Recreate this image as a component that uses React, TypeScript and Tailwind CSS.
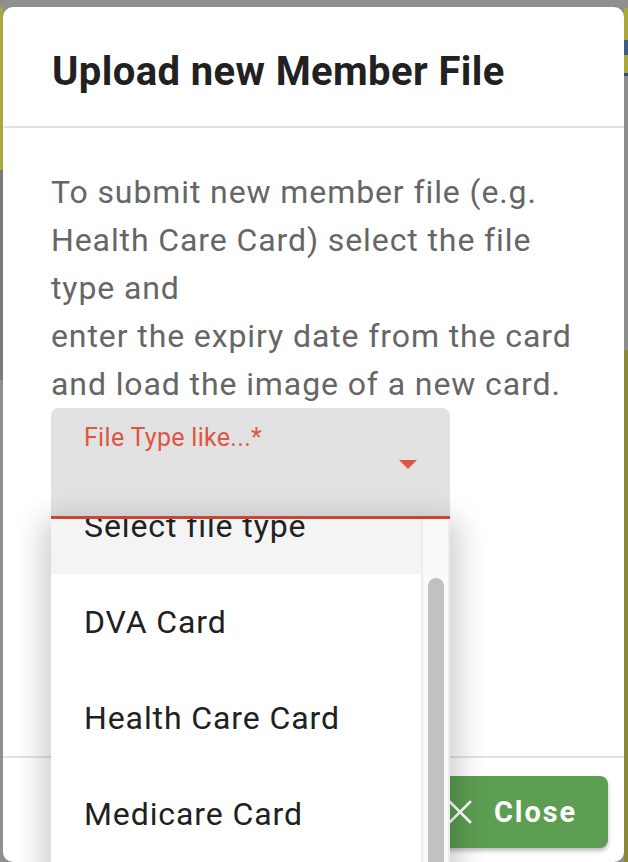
import React from "react";

export default function App() {
  const items = ["Select file type", "DVA Card", "Health Care Card", "Medicare Card"];
  return (
    <div className="w-[628px] h-[862px] overflow-hidden bg-[#8f8f8f] flex font-['Roboto',_'Liberation_Sans',_sans-serif]">
      {/* left strip of page behind overlay */}
      <div className="w-[3px] flex flex-col shrink-0">
        <div className="h-[7px] bg-[#8f8f8f]" />
        <div className="h-[163px] bg-[#a9a93b]" />
        <div className="h-[210px] bg-[#7b7b7b]" />
        <div className="flex-1 bg-[#8f8f8f]" />
      </div>

      {/* dialog column */}
      <div className="flex-1 pt-[7px] flex flex-col">
        <div className="relative flex-1 bg-white rounded-[10px] flex flex-col">
          <div className="px-[49px] pt-[41px] pb-[30px]">
            <h2 className="text-[40px] leading-[48px] font-bold text-[#212121] tracking-[0.4px] whitespace-nowrap">
              Upload new Member File
            </h2>
          </div>
          <div className="h-[2px] bg-[#e2e2e2]" />
          <div className="px-[48px] pt-[40px]">
            <p className="text-[32px] leading-[48px] text-[#666666] tracking-[0.9px] whitespace-nowrap">
              To submit new member file (e.g.
              <br />
              Health Care Card) select the file
              <br />
              type and
              <br />
              enter the expiry date from the card
              <br />
              and load the image of a new card.
            </p>
            <div className="relative w-[399px] h-[111px] bg-[#e2e2e2] rounded-t-[8px]">
              <div className="pl-[33px] pt-[16px] text-[25px] leading-[28px] text-[#df5543] tracking-[0.3px]">
                File Type like...*
              </div>
              <div className="absolute right-[33px] top-[52px] w-0 h-0 border-l-[9px] border-r-[9px] border-t-[9px] border-l-transparent border-r-transparent border-t-[#df5543]" />
              <div className="absolute left-0 right-0 bottom-0 h-[3px] bg-[#dc4c3a]" />
            </div>
          </div>
          <div className="flex-1" />
          <div className="h-[2px] bg-[#e2e2e2]" />
          <div className="flex justify-end pr-[16px] pt-[18px] pb-[14px]">
            <button className="w-[170px] h-[72px] bg-[#5c9e52] rounded-[8px] shadow-[0_3px_4px_rgba(0,0,0,0.25)] flex items-center pl-[10px] gap-[22px] text-white">
              <svg width="24" height="24" viewBox="0 0 24 24" fill="none" stroke="white" strokeWidth="2.6" strokeLinecap="square">
                <path d="M2 2 L22 22 M22 2 L2 22" />
              </svg>
              <span className="text-[29px] font-bold tracking-[1.9px] leading-none">Close</span>
            </button>
          </div>

          {/* dropdown menu overlay */}
          <div className="absolute left-[48px] top-[512px] w-[399px] h-[400px] bg-white shadow-[0_8px_28px_8px_rgba(0,0,0,0.2)] flex overflow-hidden">
            <div className="flex-1 overflow-hidden">
              <div className="-mt-[41px]">
                {items.map((it, i) => (
                  <div
                    key={it}
                    className={
                      "h-[96px] flex items-center pl-[33px] text-[32px] text-[#212121] tracking-[0.9px] " +
                      (i === 0 ? "bg-[#f4f4f4]" : "bg-white")
                    }
                  >
                    {it}
                  </div>
                ))}
              </div>
            </div>
            <div className="w-[29px] bg-[#fafafa] border-l-2 border-r-2 border-[#ececec] pt-[59px] pl-[5px]">
              <div className="w-[16px] h-[400px] rounded-full bg-[#c1c1c1]" />
            </div>
          </div>
        </div>
      </div>

      {/* right strip */}
      <div className="w-[4px] flex flex-col shrink-0">
        <div className="h-[8px] bg-[#8f8f8f]" />
        <div className="h-[32px] bg-[#a9a93b]" />
        <div className="h-[15px] bg-[#3f5a8a]" />
        <div className="h-[18px] bg-[#a9a93b]" />
        <div className="h-[3px] bg-[#2f4f8a]" />
        <div className="h-[274px] bg-[#8d8d8d]" />
        <div className="flex-1 bg-[#8a8a30]" />
      </div>
    </div>
  );
}
